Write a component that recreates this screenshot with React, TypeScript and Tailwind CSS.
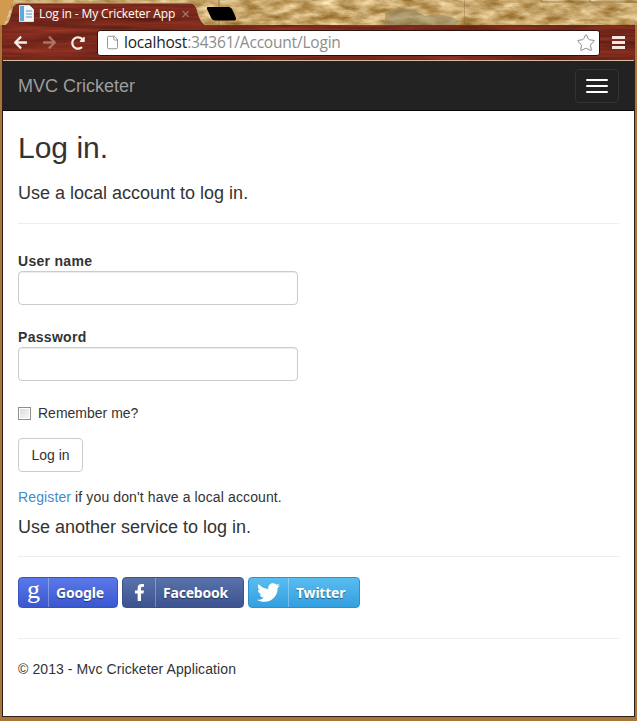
import React from 'react';
import { File, Star } from 'lucide-react';
import { FaArrowLeft, FaArrowRight, FaFacebookF, FaRedoAlt, FaTwitter } from 'react-icons/fa';

const sans = "font-['Liberation_Sans',Arial,sans-serif]";
const woodMatrix = '0.35 0 0 0 0.3  0.14 0 0 0 0.09  0.1 0 0 0 0.06  0 0 0 0 1';

// Parchment theme behind the tab strip
const Parchment = () => (
  <svg className="absolute inset-0 h-full w-full" viewBox="0 0 637 25" preserveAspectRatio="none">
    <filter id="paper" x="0" y="0" width="100%" height="100%" colorInterpolationFilters="sRGB">
      <feTurbulence type="fractalNoise" baseFrequency="0.05 0.14" numOctaves="5" seed="7" />
      <feColorMatrix values="0.6 0 0 0 0.48  0.7 0 0 0 0.3  0.8 0 0 0 0.02  0 0 0 0 1" />
    </filter>
    <rect width="637" height="25" filter="url(#paper)" />
    <path d="M0 0h14L4 25H0z" fill="#d19a4e" />
    <path d="M385 13c15-9 30-4 40 3 15-3 25 0 36 5l-6 4h-70z" fill="#8f8562" opacity=".55" />
    <path d="M218 0h2v25h-2zM464 0h1v25h-1z" fill="#7a6238" opacity=".35" />
    <path d="M541 2h96M541 0v2M590 0v2" stroke="#5f4c2c" strokeWidth="1" opacity=".6" />
  </svg>
);

// Wood grain of the toolbar and the active tab
const Wood = ({ id }: { id: string }) => (
  <svg className="absolute inset-0 h-full w-full">
    <filter id={id} x="0" y="0" width="100%" height="100%" colorInterpolationFilters="sRGB">
      <feTurbulence type="fractalNoise" baseFrequency="0.012 0.25" numOctaves="3" seed="3" />
      <feColorMatrix values={woodMatrix} />
    </filter>
    <rect width="100%" height="100%" filter={`url(#${id})`} />
  </svg>
);

const TabIcon = () => (
  <svg className="relative mr-[5px] shrink-0" width="15" height="17" viewBox="0 0 15 17">
    <path d="M.5.5h10l4 4v12H.5z" fill="#f2f6fa" stroke="#d5e2ee" />
    <rect x="1" y="1" width="4" height="15" fill="#5fa8dc" />
    <path d="M7 6h6M7 9h6M7 12h6" stroke="#8fb6d8" strokeWidth="1.4" />
  </svg>
);

const BrowserTab = () => (
  <div className="relative flex h-[23px] w-[201px] items-center pl-[14px] pr-[16px]">
    <svg className="absolute inset-0" width="201" height="23" viewBox="0 0 201 23">
      <defs>
        <filter id="tabwood" x="0" y="0" width="100%" height="100%" colorInterpolationFilters="sRGB">
          <feTurbulence type="fractalNoise" baseFrequency="0.012 0.25" numOctaves="3" seed="9" />
          <feColorMatrix values={woodMatrix} />
        </filter>
        <clipPath id="tabshape">
          <path d="M0 23C4 21 5 15 7 7 8 3 11 1 15 1h170c4 0 5 2 7 6 2 8 4 14 9 16z" />
        </clipPath>
      </defs>
      <g clipPath="url(#tabshape)">
        <rect width="201" height="23" filter="url(#tabwood)" />
      </g>
      <path d="M0 23C4 21 5 15 7 7 8 3 11 1 15 1h170c4 0 5 2 7 6 2 8 4 14 9 16" fill="none" stroke="#c9ab7c" strokeWidth="1" />
    </svg>
    <TabIcon />
    <span className="relative whitespace-nowrap font-['Open_Sans',sans-serif] text-[12px] leading-none tracking-[-0.12px] text-white">Log in - My Cricketer App</span>
    <span className={`relative ml-auto text-[15px] leading-none text-[#a57d75] ${sans}`}>×</span>
  </div>
);

const Toolbar = () => (
  <div className="relative flex h-[35px] shrink-0 items-center pl-[11px] pr-[10px]">
    <Wood id="toolbarwood" />
    <FaArrowLeft className="relative mr-[14px] shrink-0 text-[#f6ece6]" size={15} />
    <FaArrowRight className="relative mr-[14px] shrink-0 text-[#a87568]" size={15} />
    <FaRedoAlt className="relative mr-[12px] shrink-0 text-[#f6ece6]" size={14} />
    <div className="relative flex h-[26px] min-w-0 flex-1 items-center rounded-[3px] border border-[#2e100c] bg-white pl-[7px] pr-[3px]">
      <File className="mr-[4px] shrink-0 text-[#8f8f8f]" size={15} strokeWidth={1.5} />
      <span className="font-['Open_Sans',sans-serif] text-[15.5px] leading-none tracking-[-0.2px] text-[#8d8d8d]">
        <span className="text-[#222]">localhost</span>:34361/Account/Login
      </span>
      <Star className="ml-auto text-[#8a8a8a]" size={20} strokeWidth={1.2} />
    </div>
    <div className="relative ml-[12px] flex w-[13px] shrink-0 flex-col gap-[2px]">
      <span className="h-[3px] bg-[#f6e4de]" />
      <span className="h-[3px] bg-[#f6e4de]" />
      <span className="h-[3px] bg-[#f6e4de]" />
    </div>
  </div>
);

const Field = ({ label }: { label: string }) => (
  <div>
    <label className="block text-[14px] font-bold leading-[20px] tracking-[0.3px] text-[#333]">{label}</label>
    <div className="h-[34px] w-[280px] rounded-[4px] border border-[#ccc] bg-white shadow-[inset_0_1px_1px_rgba(0,0,0,0.075)]" />
  </div>
);

const SocialButton = ({ w, split, from, to, border, icon, label }: { w: string; split: string; from: string; to: string; border: string; icon: React.ReactNode; label: string }) => (
  <div className={`flex h-[31px] items-stretch rounded-[4px] border bg-gradient-to-b ${w} ${from} ${to} ${border}`}>
    <div className={`flex items-center justify-center border-r border-white/30 text-white ${split}`}>{icon}</div>
    <div className="flex flex-1 items-center pl-[7px] font-['Noto_Sans',sans-serif] text-[14px] font-bold tracking-[-0.2px] text-white [text-shadow:0_1px_1px_rgba(0,0,0,0.45)]">{label}</div>
  </div>
);

export default function App() {
  return (
    <div className={`flex h-[721px] w-[637px] flex-col overflow-hidden bg-[#a8753a] ${sans}`}>
      <div className="relative h-[25px] shrink-0 pl-[5px] pt-[2px]">
        <Parchment />
        <div className="relative flex items-end">
          <BrowserTab />
          <svg className="mt-[4px] self-start" width="31" height="15" viewBox="0 0 31 15">
            <path d="M2 1h21c1 0 2 1 3 2l4 9c.5 1.500-.5 2.500-2 2.500H9c-2 0-3-1-4-3L1 3C.5 2 1 1 2 1z" fill="#000" />
          </svg>
        </div>
      </div>

      <div className="mx-[2px] mb-[4px] flex min-h-0 flex-1 flex-col">
        <Toolbar />
        <div className="flex min-h-0 flex-1 flex-col border border-t-0 border-[#2a2018] bg-white">
          <div className="h-[1px] shrink-0 bg-[#d8b8a0]" />
          <header className="flex h-[50px] shrink-0 items-center justify-between border-b border-[#080808] bg-[#222] pl-[15px] pr-[15px]">
            <span className="text-[18px] leading-[20px] text-[#9d9d9d]">MVC Cricketer</span>
            <button className="flex h-[34px] w-[44px] flex-col items-center justify-center gap-[4px] rounded-[4px] border border-[#333]">
              <span className="h-[2px] w-[22px] rounded-[1px] bg-white" />
              <span className="h-[2px] w-[22px] rounded-[1px] bg-white" />
              <span className="h-[2px] w-[22px] rounded-[1px] bg-white" />
            </button>
          </header>

          <main className="flex-1 px-[15px] text-[#333]">
            <h1 className="mt-[20px] text-[30px] font-normal leading-[33px]">Log in.</h1>
            <h4 className="mt-[19px] text-[18px] leading-[20px]">Use a local account to log in.</h4>
            <hr className="mt-[20px] border-t border-[#eee]" />

            <div className="mt-[27px] flex flex-col gap-[22px]">
              <Field label="User name" />
              <Field label="Password" />
            </div>

            <div className="mt-[22px] flex items-center">
              <span className="h-[13px] w-[13px] border border-[#8e8e8e] bg-gradient-to-br from-[#dcdcdc] to-[#f7f7f7] shadow-[inset_0_0_0_1px_#fff]" />
              <span className="ml-[7px] text-[14px] leading-[20px]">Remember me?</span>
            </div>

            <button className="mt-[15px] block h-[34px] w-[65px] rounded-[4px] border border-[#ccc] bg-white text-[14px] leading-[20px]">Log in</button>

            <p className="mt-[15px] text-[14px] leading-[20px] tracking-[0.12px]">
              <a className="text-[#428bca]">Register</a> if you don't have a local account.
            </p>
            <h4 className="mt-[10px] text-[18px] leading-[20px]">Use another service to log in.</h4>
            <hr className="mt-[19px] border-t border-[#eee]" />

            <div className="mt-[20px] flex gap-[4px]">
              <SocialButton w="w-[100px]" split="w-[30px]" from="from-[#5b78ea]" to="to-[#3a57cf]" border="border-[#3853c4]" label="Google"
                icon={<span className="-mt-[6px] font-['Liberation_Serif',serif] text-[26px] leading-none">g</span>} />
              <SocialButton w="w-[122px]" split="w-[33px]" from="from-[#5a72aa]" to="to-[#3c5390]" border="border-[#3b5087]" label="Facebook"
                icon={<FaFacebookF size={17} />} />
              <SocialButton w="w-[112px]" split="w-[40px]" from="from-[#58bdf0]" to="to-[#329fdf]" border="border-[#2f90cc]" label="Twitter"
                icon={<FaTwitter size={23} />} />
            </div>

            <hr className="mt-[30px] border-t border-[#eee]" />
            <footer className="mt-[20px] text-[14px] leading-[20px] tracking-[0.09px]">© 2013 - Mvc Cricketer Application</footer>
          </main>
        </div>
      </div>
    </div>
  );
}
